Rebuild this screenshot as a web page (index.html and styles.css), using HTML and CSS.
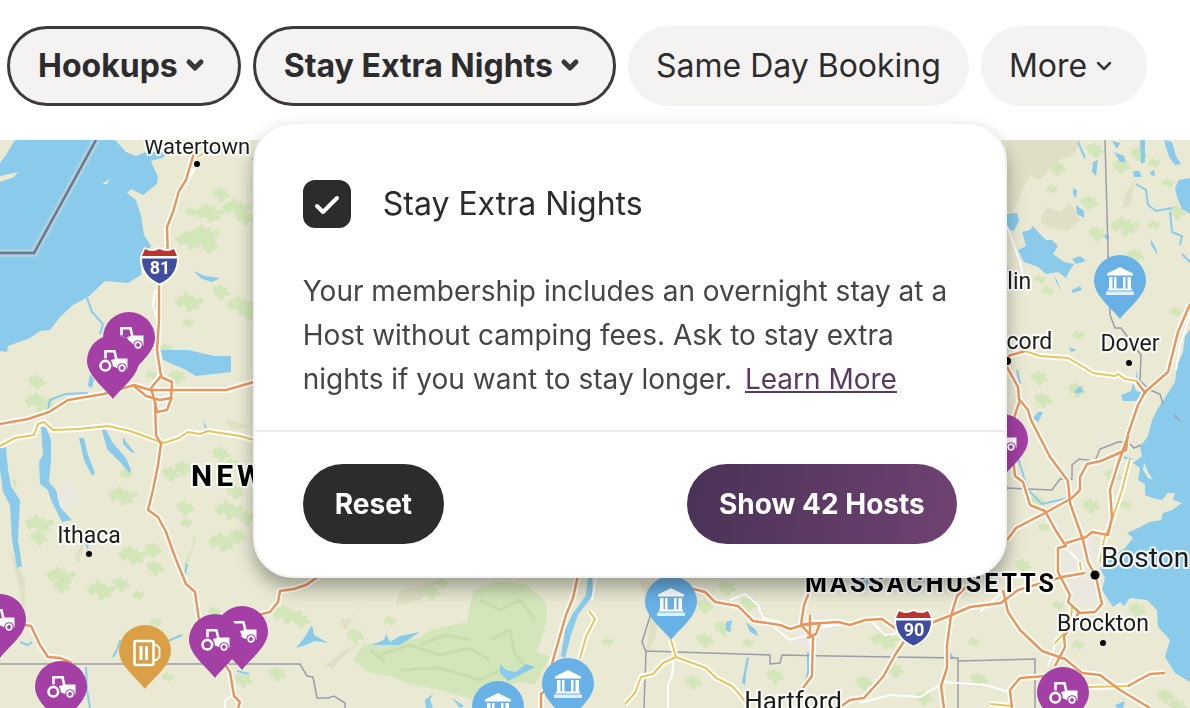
FILE: index.html
```html
<!DOCTYPE html>
<html lang="en">
<head>
    <meta charset="UTF-8">
    <meta name="viewport" content="width=device-width, initial-scale=1.0">
    <title>Find Hosts</title>
    <link rel="stylesheet" href="styles.css">
</head>
<body>
    <!-- Filters -->
    <div class="filters">
        <button type="button" class="filter active">
            Hookups
            <svg class="chevron" viewBox="0 0 28 28"><path d="M7 11l6 6 6-6"/></svg>
        </button>
        <div class="filter-group">
            <button type="button" class="filter active" aria-expanded="true">
                Stay Extra Nights
                <svg class="chevron" viewBox="0 0 28 28"><path d="M7 11l6 6 6-6"/></svg>
            </button>

            <!-- Dropdown -->
            <div class="dropdown">
                <div class="dropdown-body">
                    <label class="option">
                        <span class="check">
                            <input type="checkbox" checked>
                            <svg viewBox="0 0 48 48"><path d="M14 26l6 6 14-14"/></svg>
                        </span>
                        <span class="option-text">Stay Extra Nights</span>
                    </label>
                    <p>Your membership includes an overnight stay at a Host without camping fees. Ask to stay extra nights if you want to stay longer. <a href="#">Learn More</a></p>
                </div>
                <div class="dropdown-footer">
                    <button type="button" class="btn">Reset</button>
                    <button type="button" class="btn btn-primary">Show 42 Hosts</button>
                </div>
            </div>
        </div>
        <button type="button" class="filter">Same Day Booking</button>
        <button type="button" class="filter">
            More
            <svg class="chevron" viewBox="0 0 28 28"><path d="M7 12l6 6 6-6"/></svg>
        </button>
    </div>

    <!-- Map -->
    <div class="map">
        <svg class="map-canvas" viewBox="0 140 1190 568" preserveAspectRatio="xMinYMin slice">
            <defs>
                <path id="pin" d="M26 64C20 55 0 41 0 26A26 26 0 0 1 52 26C52 41 32 55 26 64z"/>
                <g id="farm">
                    <use href="#pin" class="purple"/>
                    <path class="line" d="M18.5 24V16.2H27.5L29.5 25"/>
                    <path class="solid" d="M24 25L30 23.5H40.5V33.5H31L25 31z"/>
                    <circle class="purple" cx="18.3" cy="30.7" r="7.5"/>
                    <circle class="line" cx="18.3" cy="30.7" r="4.8"/>
                    <circle class="purple" cx="35" cy="33" r="4.8"/>
                    <circle class="line thin" cx="35" cy="33" r="2.8"/>
                </g>
                <g id="museum">
                    <use href="#pin" class="blue"/>
                    <path class="solid" d="M13 18.5L26 12L39 18.5V20.5H13z"/>
                    <path class="solid" d="M15 22h3.5v12H15zM20 22h2.5v12H20zM29 22h2.5v12H29zM33.5 22H37v12h-3.5z"/>
                    <path class="solid" d="M14 33.5h24v2H14z"/>
                    <path class="solid soft" d="M12 36.5h28v3.5H12z"/>
                </g>
                <g id="brewery">
                    <use href="#pin" class="amber"/>
                    <rect class="line" x="15.5" y="16" width="19" height="24" rx="1.5"/>
                    <path class="line thin" d="M35 20h2.500l3 3v9l-3 3H35"/>
                    <path class="line bar" d="M22 21v14M27.500 21v14"/>
                </g>
                <g id="shield">
                    <path class="shield-edge" d="M4 0Q12 4 19.5 0Q27 4 35 0L39 10C40 24 31 34 19.5 38.5C8 34-1 24 0 10z"/>
                    <path class="shield-top" d="M5 2Q12 6 19.5 2Q27 6 34 2L37 9H2z"/>
                    <path class="shield-body" d="M2 11.5H37C37 24 30 32 19.5 36.5C9 32 2 24 2 11.5z"/>
                </g>
                <path id="wood-a" d="M0 8l4-2 1-3 4 1 1-4 4 2 2 3 4-2 1 5 5-2 4 1-1 4-5 1 2 4-4 2-3-2-2 4-5-1 1-4-4-2-4 3-2-3z"/>
                <path id="wood-b" d="M2 3l5-1 2-2 2 4 5-1-1 4 4 2-3 3-3-1-2 5-4-1-1-4-4 1 1-4-3-1z"/>
                <path id="wood-c" d="M0 4l5-4 3 3 4-1-1 5-4 3-2-3-4 1z"/>
                <g id="interstates">
                    <path d="M198 140L191 163L186 180L179 191L173 212L167 227L168 262L159 285L159 320L157 350L161 376L151 388L155 402L156 435L161 444L158 465L153 490L148 510L158 517L166 532L175 557L186 584L195 592L199 620L215 650L230 672L234 696L240 702L238 708"/>
                    <path d="M0 424L28 419L49 412L68 400L104 394L134 385L150 390L226 390L254 382"/>
                    <path d="M134 386L146 396L160 400L171 398L172 382L161 377M155 402L157 412L167 410L172 397"/>
                    <path d="M20 624L31 626L40 645L48 657L60 658L72 663"/>
                    <path d="M318 577L306 585L294 589L280 591L278 602L270 612L258 615L240 618"/>
                    <path d="M580 566L573 598L566 615L553 660L546 690L541 694L541 708"/>
                    <path d="M690 588L705 592L715 602L738 606L753 621L780 625L790 629L806 624L838 622L850 625L865 620L882 619L896 629"/>
                    <path d="M808 566L808 595L804 605L801 625L813 638L812 676L803 688M802 625L820 623L816 634L807 638M810 615V638M830 714L850 700L864 698L883 677L895 655L905 640"/>
                    <path d="M931 623L952 615L970 607L1001 603L1018 590L1042 583L1062 577L1085 573"/>
                    <path d="M967 586L957 596L951 616L947 645L947 668L941 686L944 708"/>
                    <path d="M1007 540L1016 528L1045 513L1072 498L1080 490L1080 477L1087 464L1101 461L1126 450L1128 434L1138 405L1145 392L1168 372L1178 332L1190 304"/>
                    <path d="M1007 367L1018 387L1019 399L1028 410L1031 420L1050 457L1068 481L1070 503L1083 540L1088 562L1095 575"/>
                    <path d="M1020 400L1016 412L1010 430L1015 476L1023 482L1030 505L1045 511L1056 531L1066 546L1058 548L1058 572L1070 595L1068 602L1080 613L1095 612L1102 604L1096 577"/>
                    <path d="M1066 543L1086 537L1092 532L1108 535L1112 517L1110 490L1118 464L1128 436"/>
                    <path d="M1003 590L1008 612L1020 630L1042 651L1065 659L1082 673L1100 675L1120 690L1150 708"/>
                    <path d="M1079 611L1073 625L1064 636L1065 647L1055 666M1012 708L1010 690L1020 678L1046 676M1128 686L1150 674L1165 673"/>
                    <path d="M1137 382L1146 394M1008 356L1025 351"/>
                </g>
                <g id="highways">
                    <path d="M0 446L15 438L34 435L38 424L44 422L53 430L78 429L108 426L130 431L152 439L164 443L179 438L188 432L200 434L208 431L240 436L254 440"/>
                    <path d="M198 157L220 142"/>
                    <path d="M1025 351L1040 356L1068 358L1082 366L1093 373L1115 376L1118 374L1125 379L1137 381"/>
                    <path d="M671 640L676 657L663 663L653 674L641 677L635 693L625 704M676 657L706 668L716 678L732 686L741 696L748 706"/>
                    <path d="M589 611L595 619L586 637L580 658"/>
                    <path d="M1130 459L1122 490L1112 520L1104 540L1100 562M1072 607L1070 627L1055 643"/>
                    <path d="M1088 687L1130 686M990 704L1012 706M1080 562L1081 570"/>
                </g>
            </defs>

            <rect class="land" y="140" width="2400" height="1200"/>

            <!-- Hills -->
            <g class="hills">
                <path d="M1007 140L1080 140L1074 155L1058 160L1040 180L1030 176L1022 190L1012 215L1007 210z"/>
                <path d="M1046 207L1060 212L1070 203L1080 220L1068 231L1050 228L1040 222z"/>
                <path d="M1125 194L1135 180L1130 205L1122 208z"/>
                <path d="M345 630L365 600L352 618L340 620zM325 665L345 650L360 643L345 655L332 668z"/>
                <path d="M10 550L25 580L24 620L20 590zM75 555L85 540L78 565L88 600z"/>
                <path d="M640 580L662 585L655 640L646 655L650 620z"/>
                <path d="M226 420L250 426L232 430zM400 590L440 580L420 600L395 606z"/>
            </g>
            <g class="towns">
                <path d="M148 210l8-6 6 8-4 12-8-2zM150 396l16-6 8 10-10 10zM50 500l20-20 10 20-14 10zM795 620l30-10 10 20-20 22-20-8zM1062 545l30-8 8 30-4 40-20-4-14-26z"/>
            </g>

            <!-- Forest -->
            <g class="wood">
                <use href="#wood-a" x="195" y="203"/>
                <use href="#wood-b" x="212" y="186"/>
                <use href="#wood-a" x="222" y="198"/>
                <use href="#wood-c" x="185" y="207"/>
                <use href="#wood-b" x="236" y="210"/>
                <use href="#wood-a" x="175" y="230"/>
                <use href="#wood-a" x="190" y="224"/>
                <use href="#wood-b" x="200" y="238"/>
                <use href="#wood-a" x="174" y="292"/>
                <use href="#wood-b" x="212" y="284"/>
                <use href="#wood-a" x="226" y="295"/>
                <use href="#wood-b" x="240" y="305"/>
                <use href="#wood-c" x="182" y="318"/>
                <use href="#wood-c" x="160" y="343"/>
                <use href="#wood-b" x="168" y="369"/>
                <use href="#wood-c" x="145" y="370"/>
                <use href="#wood-a" x="24" y="392"/>
                <use href="#wood-b" x="28" y="374"/>
                <use href="#wood-c" x="60" y="396"/>
                <use href="#wood-c" x="42" y="402"/>
                <use href="#wood-a" x="24" y="514"/>
                <use href="#wood-b" x="30" y="530"/>
                <use href="#wood-a" x="108" y="486"/>
                <use href="#wood-c" x="120" y="469"/>
                <use href="#wood-b" x="162" y="466"/>
                <use href="#wood-b" x="174" y="460"/>
                <use href="#wood-b" x="176" y="500"/>
                <use href="#wood-c" x="180" y="518"/>
                <use href="#wood-a" x="214" y="500"/>
                <use href="#wood-b" x="226" y="484"/>
                <use href="#wood-b" x="238" y="510"/>
                <use href="#wood-a" x="208" y="532"/>
                <use href="#wood-b" x="228" y="528"/>
                <use href="#wood-b" x="212" y="446"/>
                <use href="#wood-c" x="226" y="458"/>
                <use href="#wood-a" x="118" y="545"/>
                <use href="#wood-b" x="144" y="542"/>
                <use href="#wood-b" x="146" y="560"/>
                <use href="#wood-a" x="46" y="566"/>
                <use href="#wood-b" x="52" y="578"/>
                <use href="#wood-a" x="86" y="580"/>
                <use href="#wood-b" x="112" y="576"/>
                <use href="#wood-c" x="132" y="590"/>
                <use href="#wood-b" x="234" y="672"/>
                <use href="#wood-c" x="150" y="617"/>
                <use href="#wood-c" x="162" y="672"/>
                <use href="#wood-c" x="208" y="606"/>
                <use href="#wood-a" x="272" y="604"/>
                <use href="#wood-b" x="292" y="612"/>
                <use href="#wood-b" x="346" y="628"/>
                <use href="#wood-b" x="422" y="584"/>
                <use href="#wood-c" x="436" y="578"/>
                <use href="#wood-c" x="384" y="616"/>
                <use href="#wood-b" x="268" y="666"/>
                <use href="#wood-c" x="602" y="637"/>
                <use href="#wood-b" x="696" y="598"/>
                <use href="#wood-b" x="718" y="580"/>
                <use href="#wood-b" x="740" y="596"/>
                <use href="#wood-b" x="696" y="632"/>
                <use href="#wood-b" x="714" y="620"/>
                <use href="#wood-c" x="742" y="638"/>
                <use href="#wood-b" x="684" y="674"/>
                <use href="#wood-b" x="766" y="668"/>
                <use href="#wood-a" x="870" y="630"/>
                <use href="#wood-b" x="886" y="662"/>
                <use href="#wood-b" x="855" y="675"/>
                <use href="#wood-c" x="968" y="637"/>
                <use href="#wood-b" x="970" y="672"/>
                <use href="#wood-b" x="915" y="690"/>
                <use href="#wood-b" x="1048" y="160"/>
                <use href="#wood-b" x="1086" y="142"/>
                <use href="#wood-b" x="1112" y="158"/>
                <use href="#wood-b" x="1130" y="146"/>
                <use href="#wood-c" x="1148" y="158"/>
                <use href="#wood-b" x="1080" y="195"/>
                <use href="#wood-a" x="1110" y="216"/>
                <use href="#wood-c" x="1046" y="184"/>
                <use href="#wood-b" x="1088" y="226"/>
                <use href="#wood-b" x="1126" y="248"/>
                <use href="#wood-b" x="1168" y="204"/>
                <use href="#wood-c" x="1162" y="178"/>
                <use href="#wood-c" x="1148" y="220"/>
                <use href="#wood-c" x="1034" y="274"/>
                <use href="#wood-c" x="1042" y="286"/>
                <use href="#wood-c" x="1072" y="330"/>
                <use href="#wood-b" x="1030" y="370"/>
                <use href="#wood-b" x="1068" y="382"/>
                <use href="#wood-c" x="1170" y="307"/>
                <use href="#wood-b" x="1034" y="392"/>
                <use href="#wood-b" x="1028" y="494"/>
                <use href="#wood-b" x="1082" y="498"/>
                <use href="#wood-b" x="1104" y="468"/>
                <use href="#wood-c" x="1120" y="500"/>
                <use href="#wood-c" x="1038" y="522"/>
                <use href="#wood-b" x="1014" y="558"/>
                <use href="#wood-c" x="1052" y="600"/>
                <use href="#wood-c" x="1072" y="640"/>
                <use href="#wood-b" x="1128" y="602"/>
                <use href="#wood-b" x="1156" y="688"/>
                <use href="#wood-b" x="1168" y="698"/>
                <path d="M353 660L363 645L385 641L420 638L430 630L450 626L467 622L470 605L474 590L486 586L500 582L525 584L540 596L547 605L546 620L540 645L536 652L550 656L535 685L520 682L497 688L475 700L440 690L410 684L390 676L368 672z"/>
                <path d="M196 538l-4 12-6 18-2-4 8-16 2-12zM12 478l5 3-2 8z"/>
            </g>
            <g class="ridges">
                <path d="M380 655L410 645L440 655L470 648L490 660M400 670L440 668L480 680L505 668M480 600L500 610L520 600L535 620M490 640L510 630L515 655L530 670M370 650L385 662M420 645L445 635L470 640"/>
            </g>

            <!-- Water -->
            <g class="water">
                <path d="M15 140H115L126 152L131 163L149 157L158 177L157 184L143 195L131 189L127 193L136 200L141 216L144 235L151 246L142 262L141 275L128 283L105 281L88 297L73 305L60 317L50 330L40 331L30 338L8 346L7 352L0 351V163L6 155z"/>
                <path d="M125 152h38l6-6 3 4-10 8-30 8z"/>
                <path d="M161 350L188 350L214 356H231V372L196 376L184 369L163 360z"/>
                <path d="M41 427L46 427L51 440L51 460L49 482L56 490L60 507L72 520L62 522L51 500L48 490L40 484L39 462L43 455z"/>
                <path d="M0 448L6 447L8 470L11 486L20 500L18 540L22 566L17 568L12 540L10 505L3 492L0 470z"/>
                <path d="M79 438L84 438L88 455L95 473L92 476L84 460zM102 430L106 430L113 443L126 458L131 470L129 473L120 462L107 449zM123 437l4 6 8 10-4-1-8-8z"/>
                <path d="M193 271l12 5 15 2-8 4-10-3zM203 420l4 8-2 1zM90 374l4 6-2 8-4-2zM140 384l8 8-4-2z"/>
                <path d="M84 536l5 8-1 6-6-12z"/>
                <path d="M296 648L304 638L312 625L314 635L328 643L315 641L303 646zM372 645L384 640L386 634L390 642L400 636L420 632L400 645z"/>
                <path d="M500 664L506 670L516 672L526 664L535 667L518 676L508 681L500 673zM426 708l-1-8 8-6-3 6 3 8zM452 698l12 8-4 2z"/>
                <path d="M592 578L593 595L578 615L571 635L565 658L561 656L565 630L572 615L586 595L588 578z"/>
                <path d="M726 622l6-2-2 12-4-2zM746 622l10 8 2 6-8-4zM747 657l-5 25 3 4 1-12 3-16zM862 578l8 0-4 12-3-4zM950 652l4 6-4 1z"/>
                <path d="M1114 152l10 4 2 6-6 0zM1140 140l5 0 0 22-4 2zM1164 140l8 2 4 14 5 8-6 1-6-8zM1112 141l8 2-3 6zM1133 171l6 0 3 6-8 0zM1150 172l4-2 1 6-4-1z"/>
                <path d="M1093 162l5-2-2 16-4-4zM1073 188l4 2-1 8-3-4zM1076 205l8 6 0 7-7-4zM1175 188l4-8 11-2v36l-8-5-5-12zM1104 235l5 0 0 5-4-2z"/>
                <path d="M1007 214l10-1 2 8-5 10-7-2zM1022 232L1030 230L1033 226L1038 232L1046 240L1052 240L1058 246L1053 254L1064 262L1074 264L1070 270L1066 278L1058 272L1046 274L1038 267L1024 262L1018 250L1026 246zM1072 259l8-3 6 5-10 3zM1055 276l7 16-6-10zM1072 290l8-4 2 4-10 3zM1151 239l6 12 0 3-6-9zM1007 268l6 2 0 8-6-2z"/>
                <path d="M1190 330L1185 336L1183 352L1177 366L1175 382L1166 396L1157 410L1152 420L1148 436L1140 447L1142 456L1133 463L1140 468L1138 480L1145 484L1145 495L1153 498L1162 500L1168 493L1175 493L1173 500L1182 503L1172 510L1163 513L1161 520L1150 522L1138 528L1127 533L1133 538L1125 548L1108 560L1100 568L1105 578L1102 590L1113 607L1120 602L1124 606L1130 598L1147 600L1157 610L1158 627L1170 640L1165 657L1175 673L1190 682z"/>
                <path d="M1069 347l8 3-6 2zM1075 390l6-4 2 6-7 2zM1121 395l10-4 2-8 3 8 9 2-4 8-18 0zM1033 418l5-6 5 0-5 10zM1115 705l10-4-2 7h-6zM1137 370l1 14-3-2z"/>
            </g>
            <g class="land">
                <path d="M0 176l18-4-4 5-14 5zM102 184l8-5-3 5zM122 142l14 4 10-4 0 10-10 4-10-4zM1144 462l4 10 5 8-5-2-5-8z"/>
            </g>
            <g class="streams">
                <path d="M87 298L92 312L103 324L100 334M48 410L50 400L65 394L88 393M20 642L28 645L32 642M113 657L117 650L120 640M168 641L182 635M86 667L87 690L90 708M206 154L220 148M252 158l5 6"/>
                <path d="M1136 184L1146 190L1148 205L1156 211L1172 208M1170 212L1172 232L1182 236L1180 245M1078 142L1085 158M808 652V672L804 690M1018 458L1028 490L1042 504L1068 498M1120 456L1133 460M1017 370L1020 384M1182 254L1190 262M185 574l2-10M237 671l12 3"/>
            </g>

            <!-- Borders -->
            <path class="lake-border-glow" d="M96 140L34 253H0"/>
            <path class="lake-border" d="M96 140L34 253H0"/>
            <g class="borders">
                <path d="M1105 140L1108 250L1110 315L1115 328L1121 328L1141 355L1140 381L1150 390L1160 394L1163 404M1174 415L1180 421"/>
                <path d="M1007 488L1052 490L1060 479H1072V465L1079 459L1095 461L1100 449L1118 442H1128L1134 448L1141 445"/>
                <path d="M0 664H300L307 676L313 677L317 698L328 698L334 696L345 703V708"/>
                <path d="M652 610L642 642L646 652L644 708M646 651L770 655V664L780 663L782 655L830 656L958 658V708M958 661L1035 659V708"/>
            </g>

            <!-- Roads -->
            <g class="minor">
                <path d="M195 168L186 185M155 290L153 305L157 320M730 600L745 594L758 605L763 618L780 622M765 620L790 640L808 635M870 620L885 635L905 632M674 658L672 675L668 685V708M820 628L850 622M860 703L890 695L920 697L945 682L985 685L1010 692M1007 226L1020 262L1024 280M1060 542L1080 562M596 578L592 600M225 708V700L232 696"/>
                <path d="M1190 315L1180 345L1176 370M980 612L1005 590M1055 645L1048 666"/>
            </g>
            <use href="#interstates" class="casing"/>
            <use href="#highways" class="casing"/>
            <use href="#highways" class="highway"/>
            <use href="#interstates" class="interstate"/>

            <use href="#shield" x="140" y="247"/>
            <text class="route" x="160" y="274">81</text>
            <use href="#shield" x="894" y="609"/>
            <text class="route" x="914" y="636">90</text>

            <!-- Places -->
            <g class="dots">
                <circle cx="197" cy="164" r="3"/>
                <circle cx="89" cy="554" r="3"/>
                <circle cx="1129" cy="363" r="3"/>
                <circle cx="1007" cy="361" r="4"/>
                <circle cx="1095" cy="575" r="4.5"/>
                <circle cx="1103" cy="643" r="3"/>
            </g>
            <g class="places">
                <text class="town" x="197" y="154">Watertown</text>
                <text x="89" y="543">Ithaca</text>
                <text x="1130" y="351">Dover</text>
                <text x="1009" y="349">Concord</text>
                <text x="991" y="289">Franklin</text>
                <text x="1103" y="631">Brockton</text>
                <text class="city" x="793" y="710">Hartford</text>
                <text class="metro" x="1145" y="567">Boston</text>
            </g>
            <text class="state big" x="191" y="486">NEW YORK</text>
            <text class="state" x="805" y="592">MASSACHUSETTS</text>

            <!-- Pins -->
            <use href="#farm" x="103" y="312"/>
            <use href="#farm" x="87" y="335"/>
            <use href="#farm" x="-26" y="594"/>
            <use href="#farm" x="35" y="661"/>
            <use href="#brewery" x="119" y="625"/>
            <use href="#farm" x="216" y="606"/>
            <use href="#farm" x="189" y="614"/>
            <use href="#museum" x="472" y="681"/>
            <use href="#museum" x="542" y="658"/>
            <use href="#museum" x="645" y="576"/>
            <use href="#museum" x="1094" y="255"/>
            <use href="#farm" x="976" y="414"/>
            <use href="#farm" x="1037" y="667"/>
        </svg>
    </div>
</body>
</html>
```

FILE: styles.css
```css
* {
    box-sizing: border-box;
}
body {
    margin: 0;
    min-height: 100vh;
    display: flex;
    flex-direction: column;
    overflow: hidden;
    background-color: #fff;
    color: #2c2c2e;
    font-family: Inter, sans-serif;
}
button {
    font-family: inherit;
    cursor: pointer;
}

/* Filters */
.filters {
    display: flex;
    gap: 12px;
    padding: 26px 7px 34px;
}
.filter-group {
    position: relative;
    z-index: 2;
}
.filter {
    display: flex;
    align-items: center;
    gap: 4px;
    height: 80px;
    padding: 0 28px 2px;
    border: none;
    border-radius: 40px;
    background-color: #f4f3f2;
    color: #2c2c2e;
    font-size: 32px;
    white-space: nowrap;
}
.filter.active {
    border: 3px solid #3a3a3b;
    font-weight: 700;
}
.chevron {
    width: 28px;
    height: 28px;
    fill: none;
    stroke: #3a3a3b;
    stroke-width: 2.5;
    stroke-linecap: round;
    stroke-linejoin: round;
}
.active .chevron {
    stroke-width: 5;
}

/* Dropdown */
.dropdown {
    position: absolute;
    top: 96px;
    left: 0;
    width: 754px;
    border: 2px solid #f3f2f2;
    border-radius: 40px;
    background-color: #fff;
    box-shadow: 0 10px 18px rgba(0, 0, 0, 0.32);
}
.dropdown-body {
    padding: 56px 48px 29px;
}
.option {
    display: flex;
    align-items: center;
    gap: 32px;
    font-size: 32px;
}
.option-text {
    padding-bottom: 2px;
}
.check {
    display: grid;
}
.check input,
.check svg {
    grid-area: 1 / 1;
    width: 48px;
    height: 48px;
    margin: 0;
}
.check input {
    appearance: none;
    border: 2px solid #2c2c2e;
    border-radius: 12px;
}
.check input:checked {
    background-color: #2c2c2e;
}
.check svg {
    fill: none;
    stroke: #fff;
    stroke-width: 4;
    stroke-linecap: round;
    stroke-linejoin: round;
    pointer-events: none;
}
.dropdown p {
    margin: 41px 0 0;
    color: #454547;
    font-size: 28px;
    line-height: 44px;
}
.dropdown a {
    margin-left: 5px;
    color: #583a60;
}
.dropdown-footer {
    display: flex;
    justify-content: space-between;
    padding: 32px 48px;
    border-top: 2px solid #ececec;
}
.btn {
    height: 80px;
    padding: 0 32px;
    border: none;
    border-radius: 40px;
    background-color: #2c2c2e;
    color: #fff;
    font-size: 28px;
    font-weight: 700;
}
.btn-primary {
    background: linear-gradient(100deg, #493256, #704272);
}

/* Map */
.map {
    position: relative;
    flex: 1;
    overflow: hidden;
}
.map-canvas {
    position: absolute;
    width: 100%;
    height: 100%;
}
.land {
    fill: #e9e9d4;
}
.hills {
    fill: #dcdcc0;
    opacity: 0.7;
}
.towns {
    fill: #ebe8e0;
}
.wood {
    fill: #cfe5b5;
    opacity: 0.85;
}
.ridges {
    fill: none;
    stroke: #bfd8a2;
    stroke-width: 3;
    opacity: 0.6;
}
.water {
    fill: #8acbec;
}
.streams {
    fill: none;
    stroke: #8acbec;
    stroke-width: 2;
}
.lake-border-glow {
    fill: none;
    stroke: #a9d3e0;
    stroke-width: 8;
}
.lake-border {
    fill: none;
    stroke: #73738c;
    stroke-width: 2.5;
}
.borders {
    fill: none;
    stroke: #9c9cab;
    stroke-width: 1.5;
}
.minor {
    fill: none;
    stroke: #fff;
    stroke-width: 2;
}
.casing {
    fill: none;
    stroke: #fff;
    stroke-width: 6;
    stroke-linejoin: round;
}
.interstate {
    fill: none;
    stroke: #e8975a;
    stroke-width: 2.5;
    stroke-linejoin: round;
}
.highway {
    fill: none;
    stroke: #e5c65c;
    stroke-width: 2;
    stroke-linejoin: round;
}
.places text,
.state {
    fill: #1c1c1c;
    stroke: rgba(255, 255, 255, 0.85);
    stroke-width: 4px;
    stroke-linejoin: round;
    paint-order: stroke;
    font-family: Roboto, sans-serif;
}
.places text {
    font-size: 23px;
    text-anchor: middle;
}
.places .town {
    font-size: 22px;
}
.places .city {
    font-size: 26px;
}
.places .metro {
    font-size: 28px;
}
.state {
    fill: #000;
    font-size: 25px;
    font-weight: 700;
    letter-spacing: 3px;
}
.state.big {
    font-size: 30px;
    letter-spacing: 4px;
}
.shield-edge {
    fill: #fff;
}
.shield-top {
    fill: #ba352f;
}
.shield-body {
    fill: #3f4da0;
}
.route {
    fill: #fff;
    font-family: Roboto, sans-serif;
    font-size: 18px;
    font-weight: 700;
    text-anchor: middle;
}

/* Pins */
.purple {
    fill: #a33fa5;
}
.blue {
    fill: #68b1e6;
}
.amber {
    fill: #dba046;
}
.solid {
    fill: #fff;
}
.soft {
    opacity: 0.8;
}
.line {
    fill: none;
    stroke: #fff;
    stroke-width: 2.6;
}
.line.thin {
    stroke-width: 1.8;
}
.line.bar {
    stroke-width: 3;
}
```
